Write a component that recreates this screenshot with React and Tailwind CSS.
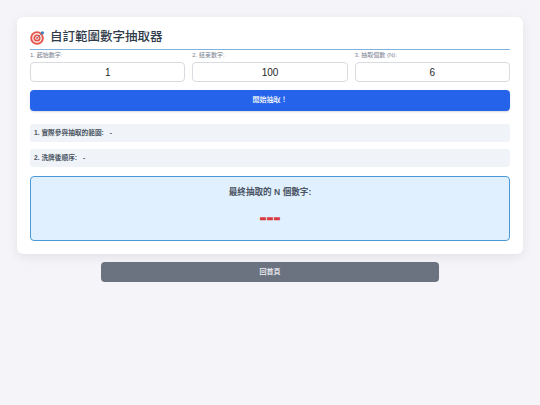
const fontStack = { fontFamily: '"Liberation Sans", "Noto Sans CJK TC", sans-serif' }

const fields = [
  { label: '1. 起始數字:', value: '1' },
  { label: '2. 結束數字:', value: '100' },
  { label: '3. 抽取個數 (N):', value: '6' }
]

const TargetIcon = () => (
  <svg width="15" height="15" viewBox="0 0 32 32" className="shrink-0">
    <circle cx="15" cy="17" r="14.5" fill="#e8544c" />
    <circle cx="15" cy="17" r="10.5" fill="#f6e9e6" />
    <circle cx="15" cy="17" r="7.5" fill="#e8544c" />
    <circle cx="15" cy="17" r="4" fill="#f6e9e6" />
    <circle cx="15" cy="17" r="2" fill="#e8544c" />
    <path d="M15 17L26 6" stroke="#6b7280" strokeWidth="1.5" />
    <circle cx="26.5" cy="6" r="3.5" fill="#3b82c4" />
  </svg>
)

export default function App() {
  return (
    <div className="min-h-[405px] bg-[#f4f4f9] pt-[17px]" style={fontStack}>
      <div className="mx-[17px] rounded-[6px] bg-white px-[13px] pb-[13px] pt-[10px] shadow-[0_3px_11px_rgba(0,0,0,0.08)]">
        <h1 className="flex h-[23px] items-center gap-[5px] border-b border-[#7fb2dc] pb-[2px] text-[12.5px] leading-[20px] font-medium text-[#2f3a4a]">
          <TargetIcon />
          自訂範圍數字抽取器
        </h1>

        <div className="grid grid-cols-3 gap-[7px]">
          {fields.map(field => (
            <div key={field.label}>
              <p className="h-[12px] text-[6px] leading-[10px] text-[#7b8290]">{field.label}</p>
              <div className="flex h-[20px] items-center justify-center rounded-[4px] border border-[#d8dbe0] bg-white text-[10px] text-[#27272a]">
                {field.value}
              </div>
            </div>
          ))}
        </div>

        <button className="mt-[8px] block h-[21px] w-full rounded-[4px] bg-[#2563eb] text-[7px] font-medium text-white shadow-[0_1px_2px_rgba(0,0,0,0.15)]">
          開始抽取！
        </button>

        <div className="mt-[13px] flex h-[18px] items-center gap-[6px] rounded-[3px] bg-[#f0f4f8] px-[4px] text-[6.7px] font-bold text-[#4b5563]">
          <span>1. 實際參與抽取的範圍:</span>
          <span>-</span>
        </div>
        <div className="mt-[7px] flex h-[18px] items-center gap-[6px] rounded-[3px] bg-[#f0f4f8] px-[4px] text-[6.7px] font-bold text-[#4b5563]">
          <span>2. 洗牌後順序:</span>
          <span>-</span>
        </div>

        <div className="mt-[9px] flex h-[65px] flex-col items-center rounded-[4px] border border-[#4a9ad8] bg-[#e0f0ff] pt-[9px]">
          <p className="text-[8.6px] leading-[12px] font-bold text-[#4b5563]">最終抽取的 N 個數字:</p>
          <p className="mt-[7px] text-[21px] leading-[24px] font-bold text-[#d9363e] [-webkit-text-stroke:0.6px_#d9363e]">---</p>
        </div>
      </div>

      <button className="mx-auto mt-[8px] block h-[20px] w-[338px] rounded-[4px] bg-[#6b7280] text-[7px] font-medium text-[#f3f4f6]">
        回首頁
      </button>
    </div>
  )
}
